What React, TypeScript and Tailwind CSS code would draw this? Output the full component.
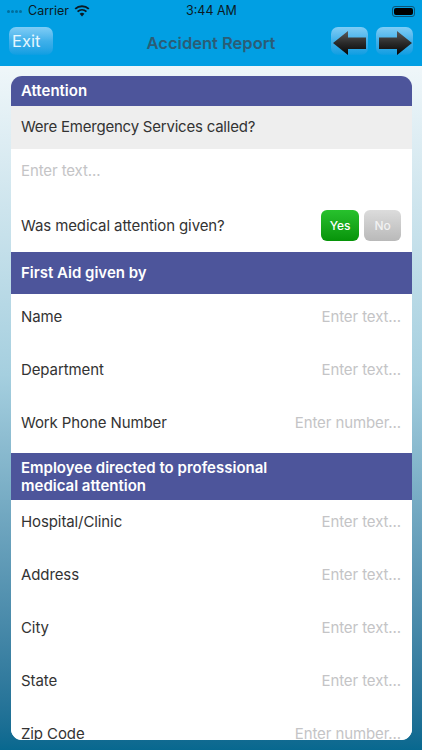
const Arrow = ({ flip }: { flip?: boolean }) => (
  <svg width="34" height="24" viewBox="0 0 34 24" className={flip ? "-scale-x-100" : ""}>
    <defs>
      <linearGradient id={flip ? "af" : "ab"} x1="0" y1="0" x2="0" y2="1">
        <stop offset="0" stopColor="#5a5a5a" />
        <stop offset="0.5" stopColor="#2a2a2a" />
        <stop offset="1" stopColor="#050505" />
      </linearGradient>
    </defs>
    <path d="M0 12 L15 0 V6.5 H33 V18 H15 V24 Z" fill={`url(#${flip ? "af" : "ab"})`} />
  </svg>
);

const Row = ({ label, hint, first }: { label: string; hint: string; first?: boolean }) => (
  <div className={`h-[53px] bg-white px-[10.5px] ${first ? "pt-[12px]" : "pt-[11px]"} flex justify-between text-[15px] tracking-[-0.1px] leading-[22px] shrink-0`}>
    <span className="text-[#333333]">{label}</span>
    <span className="text-[#c4c4c6]">{hint}</span>
  </div>
);

const Section = ({ children, className }: { children: React.ReactNode; className: string }) => (
  <div className={`bg-[#4d559b] text-white font-semibold text-[15px] px-[10.5px] shrink-0 ${className}`}>{children}</div>
);

const navBtn = "rounded-[7px] bg-gradient-to-b from-[#7fcdf6] via-[#3fb0ea] to-[#0a9ee2]";

export default function App() {
  return (
    <div className="w-[422px] h-[750px] overflow-hidden flex flex-col bg-gradient-to-b from-white via-[#a5cfdf] to-[#07688f] font-['Inter','Liberation_Sans',sans-serif]">
      <div className="bg-[#019fe3] h-[66px] shrink-0 flex flex-col">
        <div className="h-[21px] flex items-center justify-between px-[7px] pt-[1px] text-[12.5px] text-[#0b1a24] relative">
          <div className="flex items-center gap-[5px]">
            <span className="flex gap-[1px] w-[16px] opacity-30">
              <i className="w-[3px] h-[3px] rounded-full bg-black" />
              <i className="w-[3px] h-[3px] rounded-full bg-black" />
              <i className="w-[3px] h-[3px] rounded-full bg-black" />
              <i className="w-[3px] h-[3px] rounded-full bg-black" />
            </span>
            <span className="leading-none">Carrier</span>
            <svg width="16" height="12" viewBox="0 0 16 12">
              <path d="M8 11.5 L5.6 8.7 A3.6 3.6 0 0 1 10.4 8.7 Z" fill="#0b1a24" />
              <path d="M3.6 6.6 A6.6 6.6 0 0 1 12.4 6.6 M1.2 3.9 A10 10 0 0 1 14.8 3.9" fill="none" stroke="#0b1a24" strokeWidth="1.9" />
            </svg>
          </div>
          <span className="absolute left-[186px] leading-none">3:44 AM</span>
          <div className="w-[23px] h-[11px] rounded-[3px] border border-[#0b5577] p-[1px]">
            <div className="w-full h-full rounded-[2px] bg-black" />
          </div>
        </div>
        <div className="flex-1 flex items-start justify-between pl-[9px] pr-[9px] pt-[6px] relative">
          <div className={`${navBtn} w-[44px] h-[28px] flex items-center pl-[3px] text-[#e6f7ff] text-[16.5px]`}>Exit</div>
          <div className="absolute left-0 right-0 top-[6px] text-center text-[16.5px] font-semibold text-[#2a5d77] leading-[32px]">Accident Report</div>
          <div className="flex gap-[8px]">
            <div className={`${navBtn} w-[37px] h-[28px] flex items-center justify-center pt-[3px]`}><Arrow /></div>
            <div className={`${navBtn} w-[37px] h-[28px] flex items-center justify-center pt-[3px]`}><Arrow flip /></div>
          </div>
        </div>
      </div>
      <div className="mx-[10.5px] mt-[10px] h-[664px] rounded-[11px] overflow-hidden flex flex-col bg-white">
        <Section className="h-[30px] flex items-center">Attention</Section>
        <div className="h-[43px] shrink-0 bg-[#eeeeee] px-[10.5px] flex items-center text-[15px] tracking-[-0.22px] text-[#333333]">Were Emergency Services called?</div>
        <div className="h-[50px] shrink-0 px-[10.5px] pt-[11px] text-[15px] tracking-[-0.1px] leading-[22px] text-[#c4c4c6]">Enter text...</div>
        <div className="h-[53px] shrink-0 px-[10.5px] flex items-center justify-between text-[15px] tracking-[-0.1px] text-[#333333]">
          <span className="pt-[1px]">Was medical attention given?</span>
          <div className="flex gap-[5px] text-[12px] font-medium text-white">
            <div className="w-[38px] h-[31px] rounded-[6px] bg-gradient-to-b from-[#27c12d] to-[#069408] flex items-center justify-center">Yes</div>
            <div className="w-[37px] h-[31px] rounded-[6px] bg-gradient-to-b from-[#dcdcdc] to-[#b9b9b9] flex items-center justify-center text-[#f2f2f2]">No</div>
          </div>
        </div>
        <Section className="h-[42px] flex items-center">First Aid given by</Section>
        <Row first label="Name" hint="Enter text..." />
        <Row first label="Department" hint="Enter text..." />
        <Row first label="Work Phone Number" hint="Enter number..." />
        <Section className="h-[47px] flex items-center leading-[18px]"><span>Employee directed to professional<br />medical attention</span></Section>
        <Row label="Hospital/Clinic" hint="Enter text..." />
        <Row label="Address" hint="Enter text..." />
        <Row label="City" hint="Enter text..." />
        <Row label="State" hint="Enter text..." />
        <Row label="Zip Code" hint="Enter number..." />
      </div>
    </div>
  );
}
